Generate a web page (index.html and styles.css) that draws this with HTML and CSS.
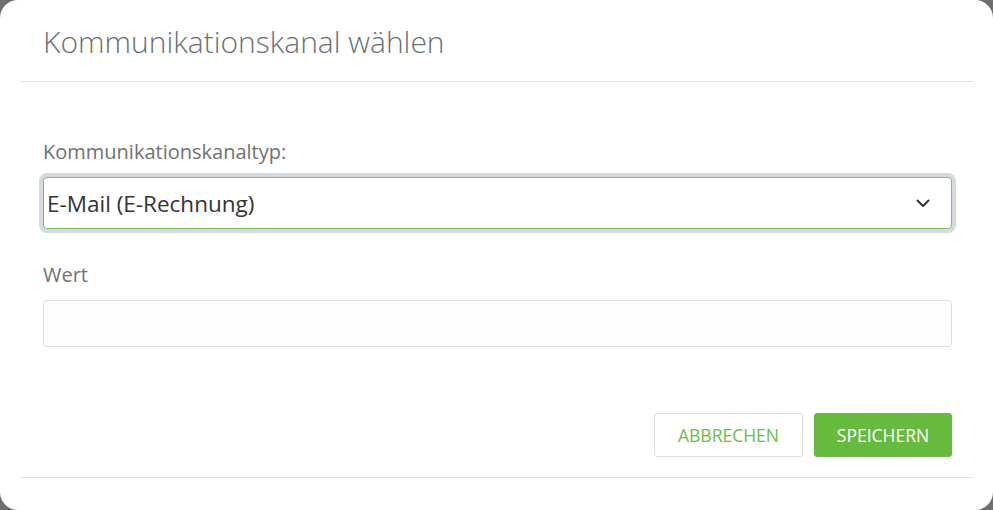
FILE: index.html
```html
<!DOCTYPE html>
<html lang="de">
<head>
<meta charset="utf-8">
<title>Kommunikationskanal wählen</title>
<link rel="stylesheet" href="styles.css">
</head>
<body>
<div class="modal">
  <div class="modal-header">
    <h1 class="modal-title">Kommunikationskanal wählen</h1>
  </div>
  <div class="modal-body">
    <div class="field">
      <label class="field-label">Kommunikationskanaltyp:</label>
      <div class="select">
        <span class="select-value">E-Mail (E-Rechnung)</span>
        <svg class="chevron" width="14" height="9" viewBox="0 0 14 9"><path d="M1.5 1.5 L7 7 L12.5 1.5" fill="none" stroke="#333" stroke-width="2" stroke-linecap="round" stroke-linejoin="round"/></svg>
      </div>
    </div>
    <div class="field field-second">
      <label class="field-label">Wert</label>
      <div class="input"></div>
    </div>
  </div>
  <div class="modal-footer">
    <button class="btn btn-default">ABBRECHEN</button>
    <button class="btn btn-primary">SPEICHERN</button>
  </div>
</div>
</body>
</html>
```
FILE: styles.css
```css
html, body {
  margin: 0;
  padding: 0;
  background: #6e6e6e;
}
body {
  font-family: "Open Sans", "Liberation Sans", sans-serif;
  width: 993px;
  height: 510px;
  overflow: hidden;
}
.modal {
  box-sizing: border-box;
  width: 993px;
  height: 510px;
  background: #fff;
  border-radius: 18px;
  padding: 0 20px;
  display: flex;
  flex-direction: column;
}
.modal-header {
  height: 81px;
  border-bottom: 1px solid #e3e3e3;
  box-sizing: content-box;
  padding-left: 23px;
}
.modal-title {
  margin: 0;
  padding-top: 22px;
  font-size: 30px;
  line-height: 40px;
  font-weight: 300;
  color: #6b7075;
}
.modal-body {
  padding: 57px 21px 0 23px;
  flex: 1;
}
.field {
  display: flex;
  flex-direction: column;
}
.field-second {
  margin-top: 33px;
}
.field-label {
  font-size: 20px;
  line-height: 26px;
  color: #717171;
  margin-bottom: 12px;
}
.select {
  box-sizing: border-box;
  height: 52px;
  border: 1px solid #7cc35a;
  border-radius: 4px;
  background: #fff;
  box-shadow: 0 0 0 4px #d6dae0;
  display: flex;
  align-items: center;
  justify-content: space-between;
  padding: 0 21px 0 3px;
}
.select-value {
  font-size: 22.5px;
  color: #333;
}
.chevron {
  display: block;
}
.input {
  box-sizing: border-box;
  height: 47px;
  border: 1px solid #dedede;
  border-radius: 4px;
  background: #fdfdfd;
}
.modal-footer {
  border-bottom: 1px solid #e3e3e3;
  padding: 0 21px 20px 0;
  display: flex;
  justify-content: flex-end;
  gap: 11px;
  margin-bottom: 32px;
}
.btn {
  font-family: "Open Sans", "Liberation Sans", sans-serif;
  font-size: 17.5px;
  height: 44px;
  border-radius: 3px;
  padding: 0;
  cursor: pointer;
}
.btn-default {
  background: #fff;
  border: 1px solid #dcdcdc;
  color: #6cbd47;
  width: 149px;
}
.btn-primary {
  background: #66bb3f;
  border: 1px solid #66bb3f;
  color: #fff;
  width: 138px;
}
```
